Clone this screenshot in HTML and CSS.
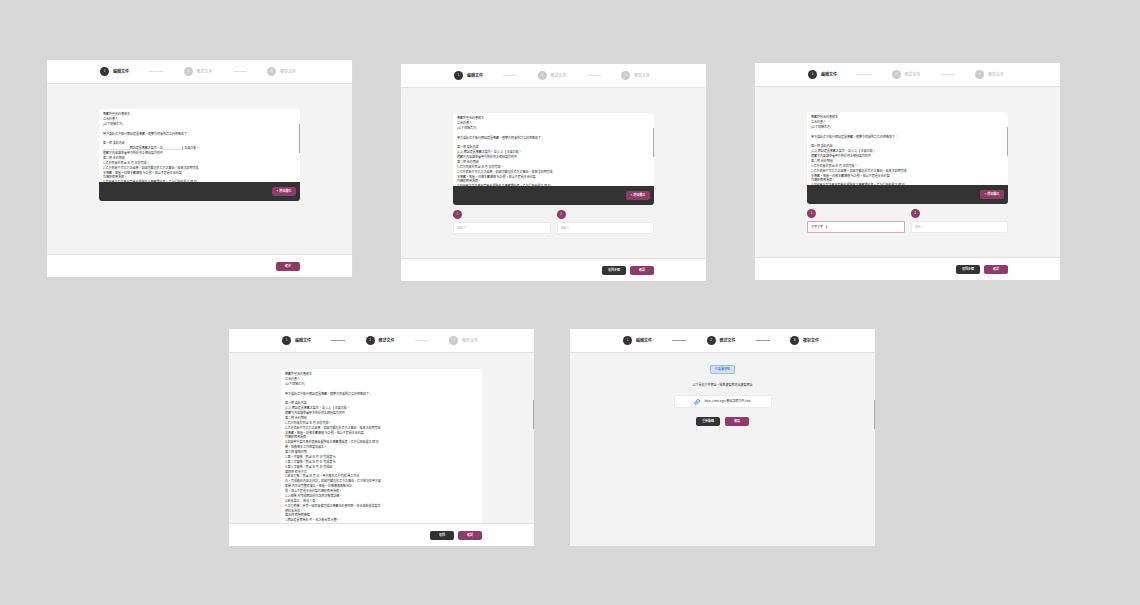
FILE: index.html
```html
<!DOCTYPE html>
<html lang="zh-Hant">
<head>
<meta charset="utf-8">
<title>簽署流程</title>
<link rel="stylesheet" href="styles.css">
</head>
<body>
<main class="canvas">

<section class="frame frame-edit">
  <header class="head"><ol class="steps">
    <li class="step on"><span class="dot">1</span>編輯文件</li><li class="line"></li>
    <li class="step"><span class="dot">2</span>確認文件</li><li class="line"></li>
    <li class="step"><span class="dot">3</span>複製文件</li>
  </ol></header>
  <div class="body">
    <div class="card editor">
      <div class="doc">
        <p>專案外包合約書範本</p><p>立合約書人</p><p>(以下簡稱乙方)</p><p></p>
        <p>甲方委託乙方執行網站建置專案，經雙方同意所訂立約條款如下：</p><p></p>
        <p>第一條 委託內容</p>
        <p>________________網站建置專案之製作，含___________<span class="caret"></span>主要功能。</p>
        <p>檔案等內容請參看甲方所提供之相關製作附件</p>
        <p>第二條 合約期間</p>
        <p>1.乙方同意於民國 年 月 日前完成。</p>
        <p>2.乙方倘若不可抗力之因素，如因可歸責於乙方之事由，致無法如期完成</p>
        <p>本專案，每逾一日按本案總價 ％計罰，但以不超過本合約製</p>
        <p>作總額費用為限。</p>
        <p>3.如因甲方製作素材更新延遲所致之專案遷延者，乙方得順延遲之 時 日</p>
      </div>
      <div class="bar"><button class="btn primary">+ 增加欄位</button></div>
      <span class="thumb"></span>
    </div>
  </div>
  <footer class="foot"><div class="wrap"><button class="btn primary">確定</button></div></footer>
</section>

<section class="frame frame-fields">
  <header class="head"><ol class="steps">
    <li class="step on"><span class="dot">1</span>編輯文件</li><li class="line"></li>
    <li class="step"><span class="dot">2</span>確認文件</li><li class="line"></li>
    <li class="step"><span class="dot">3</span>複製文件</li>
  </ol></header>
  <div class="body">
    <div class="card editor">
      <div class="doc">
        <p>專案外包合約書範本</p><p>立合約書人</p><p>(以下簡稱乙方)</p><p></p>
        <p>甲方委託乙方執行網站建置專案，經雙方同意所訂立約條款如下：</p><p></p>
        <p>第一條 委託內容</p>
        <p>(1,2) 網站建置專案之製作，含(1,2) <span class="caret"></span>主要功能。</p>
        <p>檔案等內容請參看甲方所提供之相關製作附件</p>
        <p>第二條 合約期間</p>
        <p>1.乙方同意於民國 年 月 日前完成。</p>
        <p>2.乙方倘若不可抗力之因素，如因可歸責於乙方之事由，致無法如期完成</p>
        <p>本專案，每逾一日按本案總價 ％計罰，但以不超過本合約製</p>
        <p>作總額費用為限。</p>
        <p>3.如因甲方製作素材更新延遲所致之專案遷延者，乙方得順延遲之 時 日</p>
      </div>
      <div class="bar"><button class="btn primary">+ 增加欄位</button></div>
      <span class="thumb"></span>
    </div>
    <div class="fields">
      <div class="field"><label class="dot" for="b1">1</label><input id="b1" type="text" placeholder="請輸入"></div>
      <div class="field"><label class="dot" for="b2">2</label><input id="b2" type="text" placeholder="請輸入"></div>
    </div>
  </div>
  <footer class="foot"><div class="wrap"><button class="btn dark">返回步驟</button><button class="btn primary">確認</button></div></footer>
</section>

<section class="frame frame-typing">
  <header class="head"><ol class="steps">
    <li class="step on"><span class="dot">1</span>編輯文件</li><li class="line"></li>
    <li class="step"><span class="dot">2</span>確認文件</li><li class="line"></li>
    <li class="step"><span class="dot">3</span>複製文件</li>
  </ol></header>
  <div class="body">
    <div class="card editor">
      <div class="doc">
        <p>專案外包合約書範本</p><p>立合約書人</p><p>(以下簡稱乙方)</p><p></p>
        <p>甲方委託乙方執行網站建置專案，經雙方同意所訂立約條款如下：</p><p></p>
        <p>第一條 委託內容</p>
        <p>(1,2) 網站建置專案之製作，含(1,2) <span class="caret"></span>主要功能。</p>
        <p>檔案等內容請參看甲方所提供之相關製作附件</p>
        <p>第二條 合約期間</p>
        <p>1.乙方同意於民國 年 月 日前完成。</p>
        <p>2.乙方倘若不可抗力之因素，如因可歸責於乙方之事由，致無法如期完成</p>
        <p>本專案，每逾一日按本案總價 ％計罰，但以不超過本合約製</p>
        <p>作總額費用為限。</p>
        <p>3.如因甲方製作素材更新延遲所致之專案遷延者，乙方得順延遲之 時 日</p>
      </div>
      <div class="bar"><button class="btn primary">+ 增加欄位</button></div>
      <span class="thumb"></span>
    </div>
    <div class="fields">
      <div class="field active"><label class="dot" for="c1">1</label><input id="c1" type="text" value="文字文字"><span class="caret typing"></span></div>
      <div class="field"><label class="dot" for="c2">2</label><input id="c2" type="text" placeholder="請輸入"></div>
    </div>
  </div>
  <footer class="foot"><div class="wrap"><button class="btn dark">返回步驟</button><button class="btn primary">確認</button></div></footer>
</section>

<section class="frame frame-confirm">
  <header class="head"><ol class="steps">
    <li class="step on"><span class="dot">1</span>編輯文件</li><li class="line done"></li>
    <li class="step on"><span class="dot">2</span>確認文件</li><li class="line"></li>
    <li class="step"><span class="dot">3</span>複製文件</li>
  </ol></header>
  <div class="body high">
    <div class="card">
      <div class="doc">
        <p>專案外包合約書範本</p><p>立合約書人</p><p>(以下簡稱乙方)</p><p></p>
        <p>甲方委託乙方執行網站建置專案，經雙方同意所訂立約條款如下：</p><p></p>
        <p>第一條 委託內容</p>
        <p>(1,2) 網站建置專案之製作，含(1,2) <span class="caret"></span>主要功能。</p>
        <p>檔案等內容請參看甲方所提供之相關製作附件</p>
        <p>第二條 合約期間</p>
        <p>1.乙方同意於民國 年 月 日前完成。</p>
        <p>2.乙方倘若不可抗力之因素，如因可歸責於乙方之事由，致無法如期完成</p>
        <p>本專案，每逾一日按本案總價 ％計罰，但以不超過本合約製</p>
        <p>作總額費用為限。</p>
        <p>3.如因甲方製作素材更新延遲所致之專案遷延者，乙方得順延遲之 時 日</p>
        <p>後，但應按本工作相當加展之。</p>
        <p>第三條 審核日期</p>
        <p>1.第一次審核：民國 年 月 日 完成度 %</p>
        <p>2.第二次審核：民國 年 月 日 完成度 %</p>
        <p>3.第三次審核：民國 年 月 日 完成版</p>
        <p>第四條 修改方式</p>
        <p>1.驗收付款：民國 年 月 日，甲方應於乙方完成 後工作日</p>
        <p>內，完成應約內容之測試；如因可歸責於乙方之事由，乙方無法在甲方要</p>
        <p>求後 內作出完整修復正，每逾一日按總價價款 %計</p>
        <p>罰，但以不超過本合約製作總額費用為限。</p>
        <p>2.上線後 內完成網站操作說明交教育訓練。</p>
        <p>3.驗收單位： 驗收人員：</p>
        <p>4.交付時機：另需一樣同意備完成之專案合約書同時，在合格驗收前製作</p>
        <p>使料及為憑。</p>
        <p>第五條 費用時機備</p>
        <p>1.網站建置費用料 件，合計新台幣 元整。</p>
      </div>
    </div>
  </div>
  <footer class="foot"><div class="wrap"><button class="btn dark">返回</button><button class="btn primary">確認</button></div></footer>
  <span class="thumb page"></span>
</section>

<section class="frame frame-copy">
  <header class="head"><ol class="steps">
    <li class="step on"><span class="dot">1</span>編輯文件</li><li class="line done"></li>
    <li class="step on"><span class="dot">2</span>確認文件</li><li class="line done"></li>
    <li class="step on"><span class="dot">3</span>複製文件</li>
  </ol></header>
  <div class="body share">
    <span class="badge">已簽署連結</span>
    <p class="hint">以下是你文件網址，點擊複製即送出複製網址</p>
    <div class="link">
      <svg class="chain" viewBox="0 0 24 24" fill="none" stroke="#3f72f5" stroke-width="4" stroke-linecap="round" stroke-linejoin="round"><path d="M10 13a5 5 0 0 0 7.500.5l3-3a5 5 0 0 0-7-7l-1.700 1.700"/><path d="M14 11a5 5 0 0 0-7.500-.5l-3 3a5 5 0 0 0 7 7l1.700-1.700"/></svg>
      <a href="#">http://test-sign 產品說明文件/link</a>
    </div>
    <div class="actions"><button class="btn dark">重新編輯</button><button class="btn primary">複製</button></div>
  </div>
  <span class="thumb page"></span>
</section>

</main>
</body>
</html>
```

FILE: styles.css
```css
* { box-sizing: border-box; }
body { margin: 0; background: #d8d8d8; color: #333; font-family: "Noto Sans CJK TC", sans-serif; font-size: 3px; line-height: 5px; }
p, ol { margin: 0; padding: 0; }
button, input { font: inherit; }
.canvas { position: relative; min-height: 100vh; }

/* artboards on the free canvas */
.frame { position: absolute; display: flex; flex-direction: column; width: 305px; height: 217px; background: #f3f3f3; }
.frame-edit { left: 47px; top: 60px; }
.frame-fields { left: 401px; top: 64px; }
.frame-typing { left: 755px; top: 63px; }
.frame-confirm { left: 229px; top: 329px; }
.frame-copy { left: 570px; top: 329px; }

.head { flex: none; height: 23px; padding: 0 52px; background: #fff; box-shadow: 0 1px 1px #e4e4e4; }
.steps { display: flex; align-items: center; justify-content: space-between; height: 100%; padding: 0 4px 0 1px; list-style: none; }
.step { display: flex; align-items: center; gap: 4px; font-size: 4px; font-weight: 500; color: #c4c4c4; }
.step.on { color: #333; font-weight: 700; }
.dot { display: flex; align-items: center; justify-content: center; width: 9px; height: 9px; border-radius: 50%; background: #ccc; color: #fff; font-size: 3px; font-weight: 400; }
.step.on .dot { background: #333; }
.line { width: 14px; height: 1px; background: #e0e0e0; }
.line.done { background: #999; }

.body { flex: 1; min-height: 0; padding: 26px 52px 0; }
.body.high { display: flex; padding-top: 17px; }
.card { position: relative; width: 100%; background: #fff; border-radius: 3px; }
.high .card { border-radius: 3px 3px 0 0; overflow: hidden; }
.editor { display: flex; flex-direction: column; height: 92px; }
.doc { flex: 1; min-height: 0; padding: 3px 4px 0; overflow: hidden; white-space: nowrap; }
.doc p { height: 5px; }
.doc p:nth-child(8n+5) { height: 4px; }
.caret { display: inline-block; width: 1px; height: 4px; margin: 0 1px; background: #d9a6b8; vertical-align: middle; }
.bar { flex: none; display: flex; align-items: center; justify-content: flex-end; height: 19px; padding: 0 4px; background: #333; border-radius: 0 0 3px 3px; }
.thumb { position: absolute; right: 0; top: 15px; width: 1px; height: 29px; background: #aaa; }
.thumb.page { top: 71px; }

.btn { display: flex; align-items: center; justify-content: center; width: 24px; height: 9px; padding: 0; border: 0; border-radius: 2px; color: #fff; font-weight: 500; white-space: nowrap; }
.primary { background: #8f3a67; }
.dark { background: #333; }

.fields { display: grid; grid-template-columns: 1fr 1fr; gap: 6px; padding-top: 5px; }
.field { position: relative; }
.field .dot { background: #8f3a67; }
.field input { display: block; width: 100%; height: 12px; margin-top: 3px; padding: 0 3px; border: 1px solid #ececec; border-radius: 1px; background: #fff; color: #333; outline: 0; }
.field input::placeholder { color: #bbb; opacity: 1; }
.field.active input { border-color: #d3a9bc; }
.typing { position: absolute; left: 18px; bottom: 4px; }

.foot { flex: none; height: 22px; padding: 0 52px; background: #fff; box-shadow: 0 -1px 1px #e4e4e4; position: relative; }
.wrap { display: flex; align-items: center; justify-content: flex-end; gap: 4px; height: 100%; }

.share { display: flex; flex-direction: column; align-items: center; padding-top: 13px; }
.badge { display: flex; align-items: center; justify-content: center; width: 25px; height: 9px; border: 1px solid #9dbafb; border-radius: 2px; background: #d3e0fd; color: #3f72f5; font-weight: 500; }
.hint { margin-top: 9px; }
.link { display: flex; align-items: center; justify-content: center; gap: 4px; width: 98px; height: 13px; margin-top: 7px; background: #fff; border: 1px solid #ececec; border-radius: 1px; }
.link a { color: #333; text-decoration: none; }
.chain { width: 6px; height: 6px; }
.actions { display: flex; gap: 5px; margin-top: 9px; }
```
